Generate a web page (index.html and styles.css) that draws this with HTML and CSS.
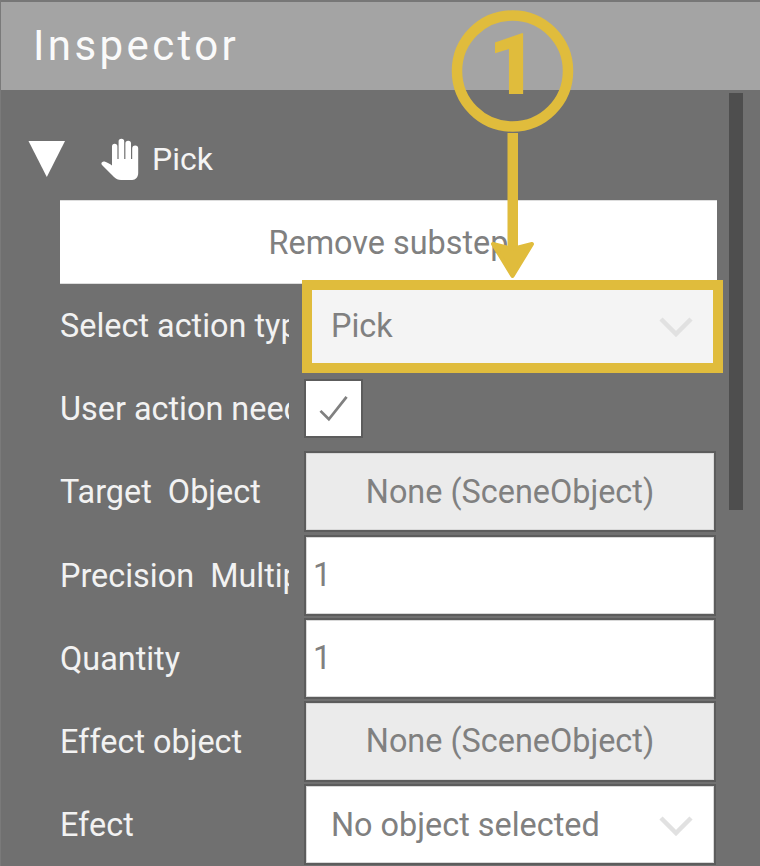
FILE: index.html
```html
<!DOCTYPE html>
<html lang="en">
<head>
<meta charset="utf-8">
<title>Inspector</title>
<link rel="stylesheet" href="styles.css">
</head>
<body>
<div class="panel">
  <header class="title"><h1>Inspector</h1></header>
  <div class="body">
    <div class="content">
      <div class="step-head">
        <svg class="caret" viewBox="0 0 38 38" aria-hidden="true"><path d="M0.500 1H37L18.800 37Z"/></svg>
        <svg class="hand" viewBox="0 0 40 44" aria-hidden="true"><path d="M11 9.500a2.700 2.700 0 0 1 5.400 0V22h1.200V4.500a2.800 2.800 0 0 1 5.600 0V22h1.200V6.500a2.800 2.800 0 0 1 5.600 0V22h1.200V11.500a3 3 0 0 1 6 0V36c0 4-2.500 7-6 7H20c-3 0-5-1-7-3L1 28c-1.500-1.500 0-4 2.500-3.500 2.500.5 5.500 2.500 7.500 4Z"/></svg>
        <span class="step-name">Pick</span>
      </div>
      <button class="remove">Remove substep</button>
      <div class="rows">
        <div class="row">
          <span class="label">Select action type</span>
          <div class="field select action"><span>Pick</span><svg class="chev" viewBox="0 0 34 20"><path d="M2 2l15 15L32 2"/></svg></div>
        </div>
        <div class="row check-row">
          <span class="label">User action needed</span>
          <div class="check"><svg viewBox="0 0 32 30"><path d="M1.500 17l9 9L29.500 2"/></svg></div>
        </div>
        <div class="row">
          <span class="label">Target  Object</span>
          <div class="field object">None (SceneObject)</div>
        </div>
        <div class="row">
          <span class="label">Precision  Multiplier</span>
          <div class="field input">1</div>
        </div>
        <div class="row">
          <span class="label">Quantity</span>
          <div class="field input">1</div>
        </div>
        <div class="row">
          <span class="label">Effect object</span>
          <div class="field object">None (SceneObject)</div>
        </div>
        <div class="row">
          <span class="label">Efect</span>
          <div class="field select"><span>No object selected</span><svg class="chev" viewBox="0 0 34 20"><path d="M2 2l15 15L32 2"/></svg></div>
        </div>
      </div>
    </div>
    <div class="scrollbar"><div class="thumb"></div></div>
  </div>
  <div class="highlight"></div>
  <svg class="callout" viewBox="0 0 130 280" aria-hidden="true">
    <circle cx="62.500" cy="71" r="55.500" class="ring"/>
    <rect x="57.500" y="133" width="10.500" height="118" class="fill"/>
    <path d="M43 244 L62.500 249 L82 244 L62.500 276Z" class="fill tip"/>
    <text x="63" y="94" class="num">1</text>
  </svg>
</div>
</body>
</html>
```
FILE: styles.css
```css
* { box-sizing: border-box; }
html, body { margin: 0; height: 100%; }
body { background: #707070; font-family: Roboto, "Liberation Sans", sans-serif; overflow: hidden; }
.panel { position: relative; width: 760px; height: 866px; background: #707070; border-left: 1px solid #7a7a7a; }
.title { height: 90px; background: #a4a4a4; border-top: 2px solid #777; display: flex; align-items: center; padding-left: 32px; }
.title h1 { margin: 0; font-size: 42px; font-weight: 400; color: #fafafa; letter-spacing: 3.400px; line-height: 1; }
.body { display: flex; height: 776px; }
.content { width: 728px; padding-left: 27px; }
.step-head { height: 110px; display: flex; align-items: center; padding-top: 27px; }
.caret { width: 38px; height: 38px; fill: #fff; }
.hand { width: 40px; height: 44px; margin-left: 35px; fill: #fff; }
.step-name { margin-left: 11px; font-size: 32px; color: #f4f4f4; line-height: 1; }
.remove { display: block; width: 657px; height: 84px; margin-left: 32px; background: #fff; border: 0; border-top: 1px solid #ddd; border-bottom: 1px solid #ddd; font: 400 32.400px Roboto, sans-serif; color: #808080; padding: 2px 0 0; }
.rows { display: flex; flex-direction: column; gap: 6.200px; margin-top: 3px; }
.row { display: flex; align-items: center; height: 77px; padding-left: 32px; }
.label { width: 229px; margin-right: 17px; padding-top: 2px; overflow: hidden; white-space: pre; font-size: 32.400px; color: #f2f2f2; line-height: 1.2; }
.field { width: 408px; height: 77px; display: flex; align-items: center; box-shadow: 0 0 0 2px #5c5c5c; border: 1px solid #d8d8d8; font-size: 32.400px; color: #808080; background: #fff; }
.object { background: #ebebeb; justify-content: center; }
.input { padding-left: 6px; }
.select { padding-left: 24px; padding-right: 20px; justify-content: space-between; }
.action { background: #f4f4f4; }
.chev { width: 34px; height: 20px; fill: none; stroke: #e1e1e1; stroke-width: 4.500px; margin-top: 3px; }
.check-row { height: 55px; margin-top: 11px; margin-bottom: 11px; }
.check { width: 55px; height: 55px; background: #fff; box-shadow: 0 0 0 2px #5c5c5c; display: flex; align-items: center; justify-content: center; }
.check svg { width: 30px; height: 28px; fill: none; stroke: #808080; stroke-width: 3px; }
.scrollbar { width: 32px; padding: 3px 0 0 1px; }
.thumb { width: 14px; height: 417px; background: #4e4e4e; }
.highlight { position: absolute; left: 301px; top: 280px; width: 421px; height: 93px; border: 10.500px solid #e0bc3c; pointer-events: none; }
.callout { position: absolute; left: 449px; top: 0; width: 130px; height: 280px; }
.ring { fill: none; stroke: #e0bc3c; stroke-width: 10.500px; }
.fill { fill: #e0bc3c; }
.tip { stroke: #e0bc3c; stroke-width: 4px; stroke-linejoin: round; }
.num { font: 900 86px Roboto, sans-serif; fill: #e0bc3c; text-anchor: middle; }
```
